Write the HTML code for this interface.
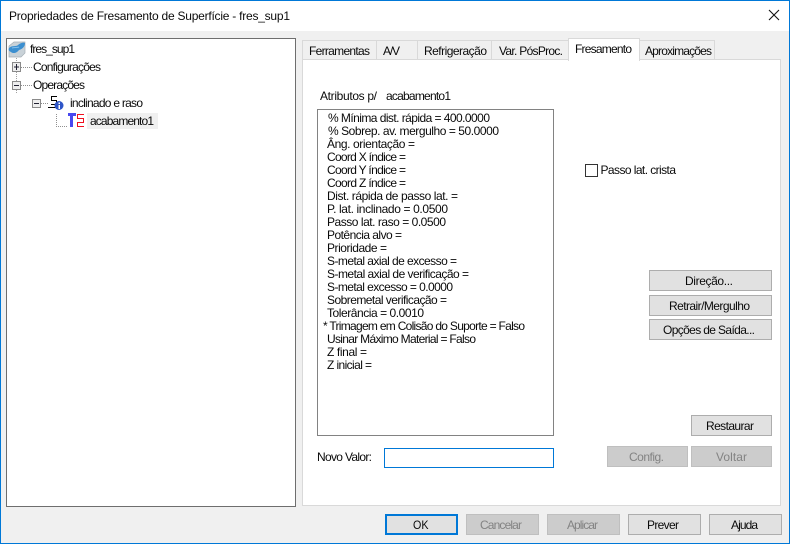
<!DOCTYPE html>
<html lang="pt"><head><meta charset="utf-8"><title>Propriedades de Fresamento de Superfície</title>
<style>
html,body{margin:0;padding:0;width:790px;height:544px;overflow:hidden;background:#f0f0f0}
svg{display:block}
text{font-family:"Liberation Sans",sans-serif;font-size:12px;fill:#0a0a0a}
.d{fill:#838383}
.b{fill:#e1e1e1;stroke:#adadad}
.x{fill:#ccc;stroke:#bfbfbf}
.t{fill:#f0f0f0;stroke:#d9d9d9}
</style></head><body>
<svg width="790" height="544" viewBox="0 0 790 544" xmlns="http://www.w3.org/2000/svg">
<rect width="790" height="544" fill="#f0f0f0"/>
<rect y="0" width="790" height="31" fill="#fff"/>
<rect x=".5" y=".5" width="789" height="543" fill="none" stroke="#0078d7"/>
<text x="9" y="20" textLength="281">Propriedades de Fresamento de Superfície - fres_sup1</text>
<path d="M769 10l10 10M779 10l-10 10" stroke="#111" stroke-width="1.1" fill="none"/>

<g shape-rendering="crispEdges">
<rect x="6.5" y="38.5" width="289" height="468" fill="#fff" stroke="#6e6e6e"/>
<rect x="87" y="113" width="71" height="16" fill="#f0f0f0"/>
</g>
<!-- root icon -->
<path d="M9 46l5-4h11v11l-4 4H9z" fill="#c9d2d8" stroke="#a5aeb5" stroke-width=".7"/>
<path d="M9 48c3-3 7-1 9-3 2-2 6-3 7-2 0 3-2 6-6 7-2 3-6 4-8 2-2-1-3-2-2-4z" fill="#3c8fd0"/>
<path d="M12 48c3-1 5 0 7-1" stroke="#7fbdea" fill="none"/>
<text x="30" y="53" textLength="45">fres_sup1</text>

<g shape-rendering="crispEdges" fill="none">
<path d="M16.500 58v5M16.500 72v9M16.500 90v3" stroke="#a0a0a0" stroke-dasharray="1 1"/>
<path d="M21 67.500h11M21 85.500h11M41 103.500h7M56.500 114v12M56 126.500h11" stroke="#909090" stroke-dasharray="1 1"/>
<rect x="12.500" y="62.500" width="8" height="9" fill="#eee" stroke="#8a8a8a"/>
<path d="M14 67h5M16.500 64v6" stroke="#223"/>
<rect x="12.500" y="81.500" width="8" height="8" fill="#eee" stroke="#8a8a8a"/>
<path d="M14 85.500h5" stroke="#223"/>
<rect x="32.500" y="99.500" width="8" height="8" fill="#eee" stroke="#8a8a8a"/>
<path d="M34 103.500h5" stroke="#223"/>
<path d="M51 96.500h6M51.500 96v5M51 100.500h6M56.500 100v5M51 104.500h6M48 107.500h9" stroke="#000"/>
</g>
<circle cx="59" cy="105.500" r="4.500" fill="#2e55c8"/>
<rect x="58.500" y="102.500" width="1.500" height="1.500" fill="#fff"/><rect x="58.500" y="105" width="1.500" height="4" fill="#fff"/>
<text x="33" y="71" textLength="68">Configurações</text>
<text x="33" y="89" textLength="52">Operações</text>
<text x="70" y="107" textLength="73">inclinado e raso</text>
<g shape-rendering="crispEdges">
<path d="M68 113h8v3h-3v11h-3v-11h-2z" fill="#4848f0"/>
<path d="M84 114.500H77.500V118.500H83.500V122.500H77.500V126.500H84" fill="none" stroke="#f01020"/>
</g>
<text x="90" y="125" textLength="64">acabamento1</text>

<!-- tabs -->
<g shape-rendering="crispEdges">
<rect x="302.500" y="59.500" width="478" height="446" fill="#fff" stroke="#d9d9d9"/>
<rect class="t" x="302.500" y="40.500" width="74" height="19"/>
<rect class="t" x="376.500" y="40.500" width="41" height="19"/>
<rect class="t" x="417.500" y="40.500" width="74" height="19"/>
<rect class="t" x="491.500" y="40.500" width="77" height="19"/>
<rect class="t" x="639.500" y="40.500" width="75" height="19"/>
<rect x="568.500" y="38.500" width="71" height="22" fill="#fff" stroke="#d9d9d9"/>
<rect x="569" y="59" width="70" height="3" fill="#fff"/>
</g>
<text x="309" y="55" textLength="61">Ferramentas</text>
<text x="383" y="55" textLength="17">A/V</text>
<text x="424" y="55" textLength="63">Refrigeração</text>
<text x="499" y="55" textLength="64">Var. PósProc.</text>
<text x="575" y="53" textLength="57">Fresamento</text>
<text x="645" y="55" textLength="67">Aproximações</text>

<text x="320" y="100" textLength="57">Atributos p/</text>
<text x="386" y="100" textLength="65">acabamento1</text>

<rect x="317.500" y="109.500" width="236" height="326" fill="#fff" stroke="#828282" shape-rendering="crispEdges"/>
<text x="328" y="122" textLength="162">% Mínima dist. rápida = 400.0000</text>
<text x="328" y="135" textLength="171">% Sobrep. av. mergulho = 50.0000</text>
<text x="327" y="148" textLength="88">Âng. orientação =</text>
<text x="327" y="161" textLength="79">Coord X índice =</text>
<text x="327" y="174" textLength="79">Coord Y índice =</text>
<text x="327" y="187" textLength="79">Coord Z índice =</text>
<text x="327" y="200" textLength="131">Dist. rápida de passo lat. =</text>
<text x="327" y="213" textLength="121">P. lat. inclinado = 0.0500</text>
<text x="327" y="226" textLength="119">Passo lat. raso = 0.0500</text>
<text x="327" y="239" textLength="75">Potência alvo =</text>
<text x="327" y="252" textLength="60">Prioridade =</text>
<text x="327" y="265" textLength="130">S-metal axial de excesso =</text>
<text x="327" y="278" textLength="142">S-metal axial de verificação =</text>
<text x="327" y="291" textLength="126">S-metal excesso = 0.0000</text>
<text x="327" y="304" textLength="120">Sobremetal verificação =</text>
<text x="327" y="317" textLength="97">Tolerância = 0.0010</text>
<text x="323" y="330" textLength="202">* Trimagem em Colisão do Suporte = Falso</text>
<text x="327" y="343" textLength="149">Usinar Máximo Material = Falso</text>
<text x="327" y="356" textLength="40">Z final =</text>
<text x="327" y="369" textLength="45">Z inicial =</text>

<rect x="585.500" y="164.500" width="12" height="12" fill="#fff" stroke="#333" shape-rendering="crispEdges"/>
<text x="600.500" y="174" textLength="75.500">Passo lat. crista</text>

<g shape-rendering="crispEdges">
<rect class="b" x="649.500" y="270.500" width="122" height="20"/>
<rect class="b" x="649.500" y="295.500" width="122" height="20"/>
<rect class="b" x="649.500" y="319.500" width="122" height="20"/>
<rect class="b" x="691.500" y="415.500" width="80" height="20"/>
<rect class="x" x="607.500" y="446.500" width="80" height="20"/>
<rect class="x" x="691.500" y="446.500" width="80" height="20"/>
<rect x="384.500" y="448.500" width="169" height="19" fill="#fff" stroke="#0078d7"/>
<rect x="386" y="515" width="71" height="19" fill="#e1e1e1" stroke="#0078d7" stroke-width="2"/>
<rect class="x" x="466.500" y="514.500" width="72" height="20"/>
<rect class="x" x="547.500" y="514.500" width="72" height="20"/>
<rect class="b" x="628.500" y="514.500" width="72" height="20"/>
<rect class="b" x="709.500" y="514.500" width="72" height="20"/>
</g>
<text x="685" y="285" textLength="48">Direção...</text>
<text x="669" y="310" textLength="81">Retrair/Mergulho</text>
<text x="663" y="334" textLength="92">Opções de Saída...</text>
<text x="706" y="430" textLength="48">Restaurar</text>
<text class="d" x="629" y="461" textLength="35">Config.</text>
<text class="d" x="716" y="461" textLength="31">Voltar</text>
<text x="317" y="461" textLength="55">Novo Valor:</text>
<text x="413" y="529" textLength="15.500" lengthAdjust="spacingAndGlyphs">OK</text>
<text class="d" x="480" y="529" textLength="42">Cancelar</text>
<text class="d" x="567" y="529" textLength="31">Aplicar</text>
<text x="647" y="529" textLength="32">Prever</text>
<text x="731" y="529" textLength="27">Ajuda</text>
</svg>
</body></html>
